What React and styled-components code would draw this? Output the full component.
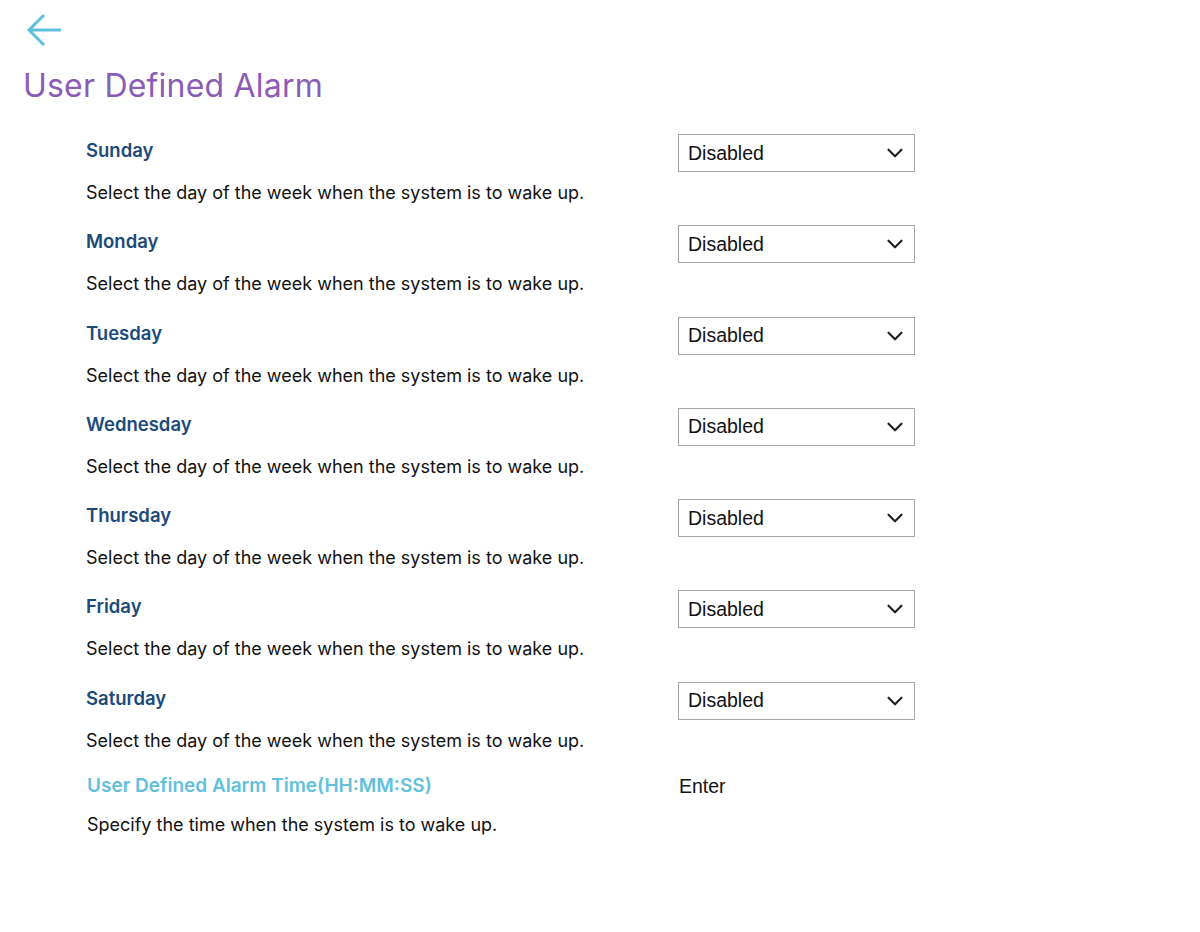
import React from "react";
import styled, { createGlobalStyle } from "styled-components";
import { ChevronDown } from "lucide-react";

const GlobalStyle = createGlobalStyle`
  html, body {
    margin: 0;
    padding: 0;
    background: #ffffff;
    font-family: Inter, "Noto Sans", sans-serif;
  }
`;

const Page = styled.div`
  padding: 12px 24px 40px 23px;
`;

const BackButton = styled.button`
  display: block;
  border: none;
  background: none;
  padding: 0;
  margin-left: 2px;
  cursor: pointer;
  svg {
    display: block;
  }
`;

const Title = styled.h1`
  margin: 18px 0 0 0;
  font-size: 32px;
  font-weight: 400;
  line-height: 40px;
  color: #8b5cb7;
  letter-spacing: 0.2px;
`;

const List = styled.div`
  margin-top: 28px;
  padding-left: 63px;
  display: flex;
  flex-direction: column;
`;

const Row = styled.div`
  display: grid;
  grid-template-columns: 592px 237px;
  grid-template-rows: 38px auto;
  height: 91.3px;
  margin-top: ${(p) => p.$shift || 0}px;
`;

const Label = styled.div`
  align-self: center;
  font-size: ${(p) => p.$size || 18.5}px;
  font-weight: 600;
  color: ${(p) => p.$color || "#1b4a7a"};
  margin-top: -6px;
  padding-left: ${(p) => p.$indent || 0}px;
`;

const Description = styled.div`
  grid-column: 1 / span 2;
  margin-top: ${(p) => p.$gap ?? 10}px;
  font-size: 18px;
  color: #111;
  padding-left: ${(p) => p.$indent || 0}px;
`;

const SelectBox = styled.div`
  box-sizing: border-box;
  height: 38px;
  border: 1px solid #a6a6a6;
  display: flex;
  align-items: center;
  justify-content: space-between;
  padding: 0 6px 0 9px;
  font-family: "Liberation Sans", Arial, sans-serif;
  font-size: 19.5px;
  color: #111;
  background: #fff;
`;

const PlainValue = styled.div`
  align-self: center;
  padding-left: 1px;
  font-family: "Liberation Sans", Arial, sans-serif;
  font-size: 19.5px;
  color: #111;
  margin-top: -4px;
`;

const days = ["Sunday", "Monday", "Tuesday", "Wednesday", "Thursday", "Friday", "Saturday"];

function BackArrow() {
  return (
    <svg width="38" height="36" viewBox="0 0 38 36">
      <path
        d="M36 18H4M19 3L4 18l15 15"
        fill="none"
        stroke="#5ec1dc"
        strokeWidth="3"
      />
    </svg>
  );
}

function App() {
  return (
    <>
      <GlobalStyle />
      <Page>
        <BackButton aria-label="Back">
          <BackArrow />
        </BackButton>
        <Title>User Defined Alarm</Title>
        <List>
          {days.map((d) => (
            <Row key={d}>
              <Label>{d}</Label>
              <SelectBox>
                <span>Disabled</span>
                <ChevronDown size={26} strokeWidth={2} color="#222" />
              </SelectBox>
              <Description>Select the day of the week when the system is to wake up.</Description>
            </Row>
          ))}
          <Row $shift={-4}>
            <Label $color="#62c0dc" $indent={1} $size={19}>
              User Defined Alarm Time(HH:MM:SS)
            </Label>
            <PlainValue>Enter</PlainValue>
            <Description $indent={1} $gap={7}>
              Specify the time when the system is to wake up.
            </Description>
          </Row>
        </List>
      </Page>
    </>
  );
}

export default App;
